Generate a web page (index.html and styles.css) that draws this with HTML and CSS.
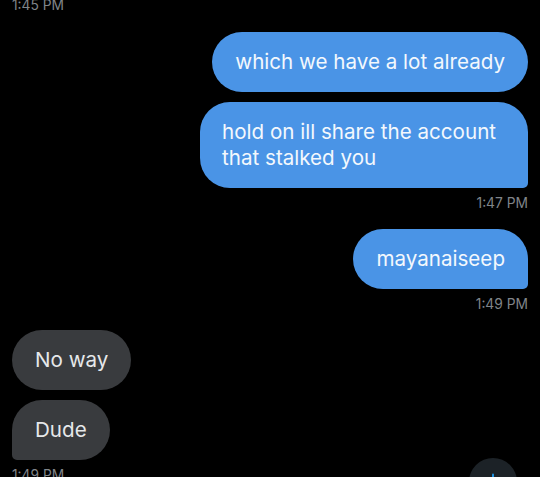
FILE: index.html
```html
<!DOCTYPE html>
<html>
<head>
<meta charset="utf-8">
<link rel="stylesheet" href="styles.css">
</head>
<body>
<div class="chat">
  <div class="ts ts-top">1:45 PM</div>
  <div class="row out first"><div class="bubble blue round">which we have a lot already</div></div>
  <div class="row out gap"><div class="bubble blue tail-r wide">hold on ill share the account that stalked you</div></div>
  <div class="ts right">1:47 PM</div>
  <div class="row out after-ts"><div class="bubble blue tail-r">mayanaiseep</div></div>
  <div class="ts right">1:49 PM</div>
  <div class="row in after-ts"><div class="bubble gray round">No way</div></div>
  <div class="row in gap"><div class="bubble gray tail-l">Dude</div></div>
  <div class="ts">1:49 PM</div>
</div>
<button class="scroll-btn" aria-label="Scroll to bottom">
  <svg width="20" height="20" viewBox="0 0 24 24" fill="none" stroke="#1d9bf0" stroke-width="2.2" stroke-linecap="round" stroke-linejoin="round"><path d="M12 3v17M5 13l7 7 7-7"/></svg>
</button>
</body>
</html>
```
FILE: styles.css
```css
html, body {
  margin: 0;
  padding: 0;
  background: #000;
  height: 100%;
  overflow: hidden;
}
body {
  font-family: Inter, Roboto, "Liberation Sans", Arial, sans-serif;
  position: relative;
}
.chat {
  display: flex;
  flex-direction: column;
  padding: 0 12px 0 12px;
}
.ts {
  font-size: 13.8px;
  line-height: 16px;
  color: #80858a;
  margin-top: 6.5px;
}
.ts.right { text-align: right; }
.ts-top { margin-top: -3.5px; }
.row { display: flex; }
.row.out { justify-content: flex-end; }
.row.in { justify-content: flex-start; }
.row.first { margin-top: 19.5px; }
.row.gap { margin-top: 10px; }
.row.after-ts { margin-top: 18.5px; }
.bubble {
  font-size: 20.6px;
  line-height: 26px;
  padding: 17px 23px;
  border-radius: 30px;
}
.blue { background: #4a94e6; color: #f3f8fd; }
.gray { background: #393b3e; color: #e6e8ea; }
.wide { max-width: 328px; box-sizing: border-box; padding: 17px 22px; }
.tail-r { border-bottom-right-radius: 5px; }
.tail-l { border-bottom-left-radius: 5px; }
.scroll-btn {
  position: absolute;
  left: 469px;
  top: 458px;
  width: 48px;
  height: 48px;
  border-radius: 50%;
  border: none;
  background: #1c2227;
  display: flex;
  align-items: center;
  justify-content: center;
  padding: 0;
}
```
